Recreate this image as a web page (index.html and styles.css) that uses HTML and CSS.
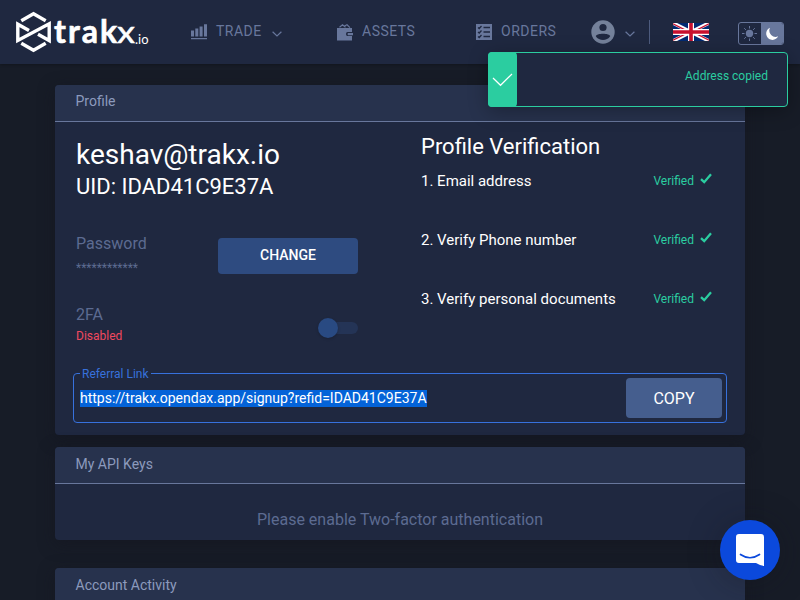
FILE: index.html
```html
<!DOCTYPE html>
<html lang="en">
<head>
<meta charset="utf-8">
<title>trakx.io – Profile</title>
<link rel="stylesheet" href="styles.css">
</head>
<body>
<header class="header">
  <a class="logo" aria-label="trakx.io">
    <svg width="134" height="44" viewBox="16 10 134 44">
      <g fill="none" stroke="#fff" stroke-width="3.4" stroke-linejoin="miter">
        <path d="M21.3 20.700 33.500 13.800 45.700 20.700M21.300 43.300 33.500 50.200 45.700 43.300"/>
        <path d="M29 30.600 17.800 24.200V40.500L49.200 23.800V40.500L38 34.200"/>
      </g>
      <g fill="#fff" font-family="Lato, sans-serif">
        <text x="54" y="42.5" font-size="32" font-weight="700" stroke="#fff" stroke-width=".6" textLength="63" lengthAdjust="spacing">trak</text>
        <text x="117" y="42.5" font-size="31" font-weight="400" stroke="#fff" stroke-width=".5" textLength="18" lengthAdjust="spacingAndGlyphs">x</text>
        <text x="135" y="43.5" font-size="13" font-weight="400" textLength="13.5" lengthAdjust="spacingAndGlyphs">.io</text>
      </g>
    </svg>
  </a>
  <nav class="nav">
    <a class="nav-item trade">
      <svg width="17" height="16" viewBox="0 0 17 16" fill="currentColor"><path d="M0 6.500h3v6H0zM4.300 4.500h3v8h-3zM8.600 2.500h3v10h-3zM13 .2h3v12.300h-3zM0 14h16v1.200H0z"/></svg>
      <span>TRADE</span>
      <svg class="chevron" width="10" height="6" viewBox="0 0 10 6"><path d="M.6.8 5 5 9.400.8"/></svg>
    </a>
    <a class="nav-item assets">
      <svg width="17" height="17" viewBox="0 0 17 17" fill="currentColor"><path d="M2.500 3.200 5.500.8 8.500 3.200M7.500 2 10 .8 13 3.600" fill="none" stroke="currentColor" stroke-width="1.200"/><path d="M0 4h15v4h-4.500Q9 8 9 10t1.500 2H15v4.500H0zM11 9h5v2.200h-5q-1.100-1.100 0-2.200z"/></svg>
      <span>ASSETS</span>
    </a>
    <a class="nav-item orders">
      <svg width="16" height="16" viewBox="0 0 16 16"><path d="M0 0h16v16H0z" fill="currentColor"/><path d="m2 3.500 1.200 1L5.500 2M2 8l1.200 1 2.300-2.500M2 12.500l1.200 1L5.500 11M7.500 3.500H14M7.500 8H14M7.500 12.500H14" fill="none" stroke="#1f2840" stroke-width="1.300"/></svg>
      <span>ORDERS</span>
    </a>
  </nav>
  <a class="user">
    <svg width="24" height="24" viewBox="0 0 24 24"><circle cx="12" cy="12" r="11.700" fill="#74819a"/><circle cx="12" cy="7.500" r="3.600" fill="#1f2840"/><path d="M4.800 16.200C5 12.800 19 12.800 19.200 16.200 16 21.200 8 21.200 4.800 16.200z" fill="#1f2840"/></svg>
    <svg class="chevron" width="10" height="6" viewBox="0 0 10 6"><path d="M.6.8 5 5 9.400.8"/></svg>
  </a>
  <span class="divider"></span>
  <svg class="flag" width="36" height="18" viewBox="0 0 60 30"><path fill="#012a72" d="M0 0h60v30H0z"/><path d="M0 0 60 30M60 0 0 30" stroke="#fff" stroke-width="6"/><path d="M0 1.400 30 16.400M30 13.600 60 28.600M0 28.600 30 13.600M30 16.400 60 1.400" stroke="#c8102e" stroke-width="2"/><path d="M30 0v30M0 15h60" stroke="#fff" stroke-width="10"/><path d="M30 0v30M0 15h60" stroke="#c8102e" stroke-width="6"/></svg>
  <div class="theme">
    <svg width="22" height="21" viewBox="0 0 22 21"><circle cx="10.500" cy="10.500" r="3.700" fill="#68779c"/><path d="M10.500 3v2.500M10.500 15.500V18M3 10.500h2.500M15.500 10.500H18M5.200 5.200l1.700 1.700M14.100 14.100l1.700 1.700M5.200 15.800l1.700-1.700M14.100 6.900l1.700-1.700" stroke="#68779c"/></svg>
    <span class="theme-dark"><svg width="14" height="14" viewBox="0 0 14 14"><path d="M5 .8a6.300 6.300 0 1 0 8.200 8.500A6.300 6.300 0 0 1 5 .8z" fill="#fff"/></svg></span>
  </div>
</header>

<main class="main">
  <section class="card profile">
    <h2 class="card-title">Profile</h2>
    <div class="profile-body">
      <div class="account">
        <div class="email">keshav@trakx.io</div>
        <div class="uid">UID: IDAD41C9E37A</div>
        <div class="setting password">
          <div><div class="label">Password</div><div class="stars">************</div></div>
          <button class="change">CHANGE</button>
        </div>
        <div class="setting twofa">
          <div><div class="label">2FA</div><div class="disabled">Disabled</div></div>
          <span class="switch"><i></i></span>
        </div>
      </div>
      <div class="verification">
        <h3>Profile Verification</h3>
        <div class="step"><span>1. Email address</span><span class="verified">Verified <svg width="12" height="11" viewBox="0 0 12 11"><path d="M1 6.200 4.200 9.200 11 1.200"/></svg></span></div>
        <div class="step"><span>2. Verify Phone number</span><span class="verified">Verified <svg width="12" height="11" viewBox="0 0 12 11"><path d="M1 6.200 4.200 9.200 11 1.200"/></svg></span></div>
        <div class="step"><span>3. Verify personal documents</span><span class="verified">Verified <svg width="12" height="11" viewBox="0 0 12 11"><path d="M1 6.200 4.200 9.200 11 1.200"/></svg></span></div>
      </div>
    </div>
    <fieldset class="referral">
      <legend>Referral Link</legend>
      <div class="referral-row">
        <span class="link">https://trakx.opendax.app/signup?refid=IDAD41C9E37A</span>
        <button class="copy">COPY</button>
      </div>
    </fieldset>
  </section>
  <section class="card keys">
    <h2 class="card-title">My API Keys</h2>
    <p class="notice">Please enable Two-factor authentication</p>
  </section>
  <section class="card activity">
    <h2 class="card-title">Account Activity</h2>
  </section>
</main>

<div class="toast">
  <span class="toast-icon"><svg width="21" height="14" viewBox="0 0 21 14"><path d="m1 5 7.500 7.300L20 1"/></svg></span>
  <span class="toast-text">Address copied</span>
</div>
<div class="chat"><svg width="28" height="32" viewBox="0 0 28 32"><path d="M3 0h22q3 0 3 3v29q-4-.5-8-3H3q-3 0-3-3V3q0-3 3-3z" fill="#fff"/><path d="M4.500 20.500Q14 27 23.500 20.500" fill="none" stroke="#0b49dc" stroke-width="1.700" stroke-linecap="round"/></svg></div>
</body>
</html>
```
FILE: styles.css
```css
* { box-sizing: border-box; }
body {
  margin: 0;
  height: 600px;
  overflow: hidden;
  background: #171c27;
  font-family: Roboto, sans-serif;
  color: #fff;
}
h2, h3, p { margin: 0; font-weight: 400; }
button { border: 0; padding: 0; font-family: inherit; color: #fff; }
svg { display: block; flex: none; }

.header {
  display: flex;
  align-items: center;
  height: 64px;
  padding: 0 16px;
  background: #1f2840;
  box-shadow: 0 1px 3px rgba(0, 0, 0, .25);
}
.logo { width: 175px; }
.nav { display: flex; width: 400px; color: #68779c; }
.nav-item { display: flex; align-items: center; height: 20px; font-size: 14px; line-height: 20px; letter-spacing: .5px; }
.nav-item span { margin: -2px 0 0 9px; }
.trade { width: 146px; }
.trade span { margin-left: 8px; }
.assets { width: 139px; }
.assets span { margin-left: 8px; }
.chevron { fill: none; stroke: #68779c; stroke-width: 1.2; margin: 3px 0 0 10px; }
.user { display: flex; align-items: center; width: 58px; }
.divider { width: 1px; height: 24px; background: #4d5b7e; }
.flag { margin-left: 23px; }
.theme {
  display: flex;
  width: 46px;
  height: 23px;
  margin: 3px 0 0 29px;
  border: 1px solid #68779c;
  border-radius: 3px;
  overflow: hidden;
}
.theme-dark { flex: 1; display: flex; align-items: center; justify-content: center; background: #68779c; }

.main { width: 690px; margin: 21px 0 0 55px; }
.card {
  background: #1f2840;
  border-radius: 4px;
  overflow: hidden;
  box-shadow: 0 4px 16px rgba(20, 20, 30, .5);
}
.card-title {
  height: 37px;
  padding: 0 20.5px;
  background: #27324d;
  border-bottom: 1px solid #68779c;
  font-size: 14px;
  line-height: 35px;
  color: #8c9abd;
}
.profile .card-title { line-height: 33px; }
.profile { height: 350px; }
.profile-body { display: flex; height: 248px; padding: 0 33px 0 21px; }
.account { width: 345px; padding-top: 15px; }
.email { font-size: 28px; line-height: 36px; }
.uid { font-size: 22px; line-height: 28px; }
.setting { display: flex; justify-content: space-between; width: 282px; }
.password { margin-top: 33px; height: 71px; }
.label { font-size: 16px; line-height: 20px; color: #5c6b91; }
.stars { margin-top: 4px; font-size: 12px; line-height: 20px; color: #5c6b91; }
.change { width: 140px; height: 36px; margin-top: 4px; padding-bottom: 2px; border-radius: 4px; background: #2e4b80; font-size: 14px; font-weight: 500; }
.disabled { margin-top: 1px; font-size: 12px; line-height: 20px; color: #f0485f; }
.switch { display: flex; align-items: center; width: 36px; height: 12px; margin-top: 17px; border-radius: 6px; background: #243456; }
.switch i { width: 20px; height: 20px; margin-left: -4px; border-radius: 50%; background: #294a82; box-shadow: 0 1px 3px rgba(0, 0, 0, .2); }
.verification { flex: 1; padding-top: 10px; }
.verification h3 { height: 35px; font-size: 22px; line-height: 29px; }
.step { display: flex; justify-content: space-between; height: 59px; font-size: 15px; line-height: 28px; }
.verified { display: flex; gap: 6px; font-size: 12px; color: #2bcda0; }
.verified svg { margin-top: 6px; fill: none; stroke: #2bcda0; stroke-width: 2.3; }
.referral {
  height: 56px;
  margin: -3px 18px 0;
  padding: 0 4px;
  border: 1px solid #3771dc;
  border-radius: 4px;
}
.referral legend { margin-left: 2px; padding: 1px 2px 0; font-size: 12px; line-height: 12px; color: #3771dc; }
.referral-row { display: flex; align-items: flex-start; justify-content: space-between; }
.link { margin: 10px 0 0 2px; background: #0463d8; font-size: 14px; line-height: 17px; }
.copy { width: 96px; height: 40px; margin-top: -2px; border-radius: 4px; background: #455e8e; font-size: 16px; }
.keys { height: 93px; margin-top: 12px; }
.notice { padding-top: 26px; text-align: center; font-size: 16px; line-height: 20px; color: #5c6b91; }
.activity { height: 60px; margin-top: 28px; }

.toast {
  position: absolute;
  top: 52px;
  left: 488px;
  display: flex;
  justify-content: space-between;
  width: 300px;
  height: 55px;
  background: #1f2840;
  border: 1px solid #2bcda0;
  border-radius: 4px;
  box-shadow: 0 4px 20px rgba(0, 0, 0, .3);
}
.toast-icon { display: flex; align-items: center; justify-content: center; width: 29px; margin: -1px; background: #2bcda0; border-radius: 4px; }
.toast-icon svg { fill: none; stroke: #fff; stroke-width: 1.2; }
.toast-text { margin: 15px 19px 0 0; font-size: 12px; line-height: 16px; color: #2bcda0; }
.chat {
  position: absolute;
  top: 520px;
  left: 720px;
  display: flex;
  align-items: center;
  justify-content: center;
  width: 60px;
  height: 60px;
  border-radius: 50%;
  background: #0b49dc;
  box-shadow: 0 2px 32px rgba(20, 20, 30, .35);
}
```
